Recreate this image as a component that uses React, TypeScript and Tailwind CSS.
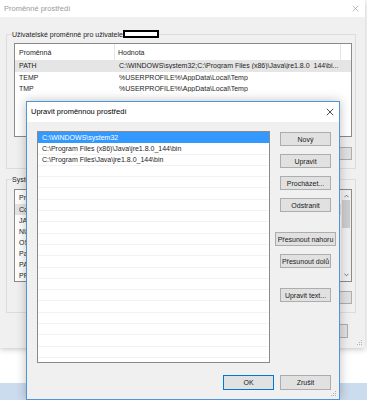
import React from "react";

const dialogRows = [
  "C:\\WINDOWS\\system32",
  "C:\\Program Files (x86)\\Java\\jre1.8.0_144\\bin",
  "C:\\Program Files\\Java\\jre1.8.0_144\\bin",
];

const userVars = [
  { name: "PATH", value: "C:\\WINDOWS\\system32;C:\\Program Files (x86)\\Java\\jre1.8.0_144\\bi...", active: true },
  { name: "TEMP", value: "%USERPROFILE%\\AppData\\Local\\Temp" },
  { name: "TMP", value: "%USERPROFILE%\\AppData\\Local\\Temp" },
];

const systemVars = [
  { name: "ComSpec", active: true },
  { name: "JAVA_HOME" },
  { name: "NUMBER_OF_PROCESSORS" },
  { name: "OS" },
  { name: "Path" },
  { name: "PATHEXT" },
  { name: "PROCESSOR_LEVEL" },
];

function CloseX({ className }: { className: string }) {
  return (
    <svg viewBox="0 0 10 10" className={className} fill="none" stroke="currentColor" strokeWidth={1}>
      <path d="M1 1 L9 9 M9 1 L1 9" />
    </svg>
  );
}

function Grip() {
  return (
    <svg viewBox="0 0 6 6" className="w-[6px] h-[6px]" fill="#b0b0b0">
      <rect x="4" y="0" width="1" height="1" />
      <rect x="2" y="2" width="1" height="1" />
      <rect x="4" y="2" width="1" height="1" />
      <rect x="0" y="4" width="1" height="1" />
      <rect x="2" y="4" width="1" height="1" />
      <rect x="4" y="4" width="1" height="1" />
    </svg>
  );
}

function Btn({ children, className = "" }: { children?: React.ReactNode; className?: string }) {
  return (
    <div
      className={`flex items-center justify-center border bg-[#e1e1e1] text-[#1a1a1a] whitespace-nowrap ${className}`}
    >
      {children}
    </div>
  );
}

export default function App() {
  return (
    <div className="relative w-[367px] h-[400px] overflow-hidden bg-white font-['Liberation_Sans',Arial,sans-serif] text-[7px] leading-none text-[#1e1e1e]">
      {/* Back window: Proměnné prostředí */}
      <div className="relative w-[365px] h-[348px] bg-[#f0f0f0] flex flex-col shadow-[0_1px_6px_rgba(0,0,0,0.25)]">
        <div className="h-[17px] bg-white flex items-center justify-between pl-[4px] pr-[6px]">
          <span className="text-[#9a9a9a] text-[7.5px]">Proměnné prostředí</span>
          <CloseX className="w-[7px] h-[7px] text-[#a0a0a0]" />
        </div>

        <div className="flex flex-col px-[6px]">
          {/* User variables */}
          <fieldset className="mt-[13px] w-[350px] border border-[#dcdcdc] pl-[7px] pr-[3px] pb-[8px]">
            <legend className="-ml-[2px] leading-[9px]">
              Uživatelské proměnné pro uživatele
              <span className="inline-block align-[-1px] w-[36px] h-[8px] border-2 border-black bg-white" />
            </legend>
            <div className="mt-[4px] h-[94px] bg-white border border-[#8a8a8a] overflow-hidden">
              <div className="h-[16px] flex items-center">
                <div className="w-[100px] h-full flex items-center pl-[4px] border-r border-[#e5e5e5]">Proměnná</div>
                <div className="w-[226px] h-full flex items-center pl-[3px] border-r border-[#e5e5e5]">Hodnota</div>
              </div>
              {userVars.map((v) => (
                <div
                  key={v.name}
                  className={`h-[11.5px] flex items-center ${v.active ? "bg-[#e5e5e5]" : ""}`}
                >
                  <div className="w-[101px] pl-[4px]">{v.name}</div>
                  <div className="w-[226px] pl-[3px] whitespace-nowrap overflow-hidden">{v.value}</div>
                </div>
              ))}
            </div>
            <div className="mt-[10px] flex justify-end">
              <Btn className="w-[64px] h-[13px] border-[#adadad]" />
            </div>
          </fieldset>

          {/* System variables */}
          <fieldset className="mt-[6px] w-[350px] border border-[#dcdcdc] pl-[7px] pr-[3px] pb-[8px]">
            <legend className="-ml-[2px] leading-[9px]">Systémové proměnné</legend>
            <div className="mt-[5px] h-[93px] bg-white border border-[#8a8a8a] overflow-hidden flex">
              <div className="flex-1 flex flex-col">
                <div className="h-[15px] flex items-center">
                  <div className="w-[100px] h-full flex items-center pl-[4px] border-r border-[#e5e5e5]">Proměnná</div>
                </div>
                {systemVars.map((v) => (
                  <div
                    key={v.name}
                    className={`h-[11px] shrink-0 flex items-center ${v.active ? "bg-[#e5e5e5]" : ""}`}
                  >
                    <div className="w-[101px] pl-[4px] whitespace-nowrap">{v.name}</div>
                  </div>
                ))}
              </div>
              <div className="w-[10px] bg-[#f0f0f0] flex flex-col items-center">
                <svg viewBox="0 0 6 4" className="w-[5px] h-[4px] mt-[4px] text-[#606060]" fill="none" stroke="currentColor">
                  <path d="M0.5 3.5 L3 1 L5.5 3.5" />
                </svg>
                <div className="mt-[2px] w-[8px] h-[28px] bg-[#cdcdcd]" />
                <div className="flex-1" />
                <svg viewBox="0 0 6 4" className="w-[5px] h-[4px] mb-[4px] text-[#606060]" fill="none" stroke="currentColor">
                  <path d="M0.5 0.5 L3 3 L5.5 0.5" />
                </svg>
              </div>
            </div>
            <div className="mt-[9px] flex justify-end">
              <Btn className="w-[64px] h-[13px] border-[#adadad]" />
            </div>
          </fieldset>

          <div className="mt-[11px] flex justify-end pr-[11px]">
            <Btn className="w-[64px] h-[14px] border-[#adadad]" />
          </div>
        </div>

        <div className="absolute right-[2px] bottom-[2px]">
          <Grip />
        </div>
      </div>

      <div className="h-[35px] bg-white" />
      <div className="h-[17px] bg-[#cbdcee]" />

      {/* Front dialog: Upravit proměnnou prostředí */}
      <div className="absolute left-[26px] top-[101px] w-[314px] h-[299px] border border-[#4f94d9] bg-[#f0f0f0] flex flex-col shadow-[0_0_10px_rgba(0,0,0,0.25)]">
        <div className="h-[20px] bg-white flex items-center justify-between pl-[4px] pr-[5px]">
          <span className="text-[7.5px] text-black">Upravit proměnnou prostředí</span>
          <CloseX className="w-[8px] h-[8px] text-[#222]" />
        </div>

        <div className="flex pl-[10px] pt-[9px] gap-[10px]">
          <div className="w-[233px] h-[232px] bg-white border border-[#8a8a8a] overflow-hidden flex flex-col">
            {Array.from({ length: 21 }).map((_, i) => (
              <div
                key={i}
                className={`h-[11.3px] shrink-0 flex items-center pl-[4px] border-b ${
                  i === 0 ? "bg-[#3399ff] text-white border-[#3399ff]" : "border-[#f2f2f2]"
                }`}
              >
                {dialogRows[i] ?? ""}
              </div>
            ))}
          </div>

          <div className="w-[51px] flex flex-col items-center pt-[1px]">
            <Btn className="w-[51px] h-[14px] border-[#adadad]">Nový</Btn>
            <Btn className="mt-[8px] w-[51px] h-[14px] border-[#adadad]">Upravit</Btn>
            <Btn className="mt-[8px] w-[51px] h-[14px] border-[#adadad]">Procházet...</Btn>
            <Btn className="mt-[8px] w-[51px] h-[14px] border-[#adadad]">Odstranit</Btn>
            <Btn className="mt-[20px] w-[61px] h-[14px] border-[#adadad]">Přesunout nahoru</Btn>
            <Btn className="mt-[8px] w-[51px] h-[14px] border-[#adadad]">Přesunout dolů</Btn>
            <Btn className="mt-[20px] w-[51px] h-[14px] border-[#adadad]">Upravit text...</Btn>
          </div>
        </div>

        <div className="mt-[12px] flex justify-end gap-[6px] pr-[8px]">
          <Btn className="w-[51px] h-[15px] border-[#0078d7]">OK</Btn>
          <Btn className="w-[51px] h-[15px] border-[#adadad]">Zrušit</Btn>
        </div>

        <div className="absolute right-[2px] bottom-[2px]">
          <Grip />
        </div>
      </div>
    </div>
  );
}
